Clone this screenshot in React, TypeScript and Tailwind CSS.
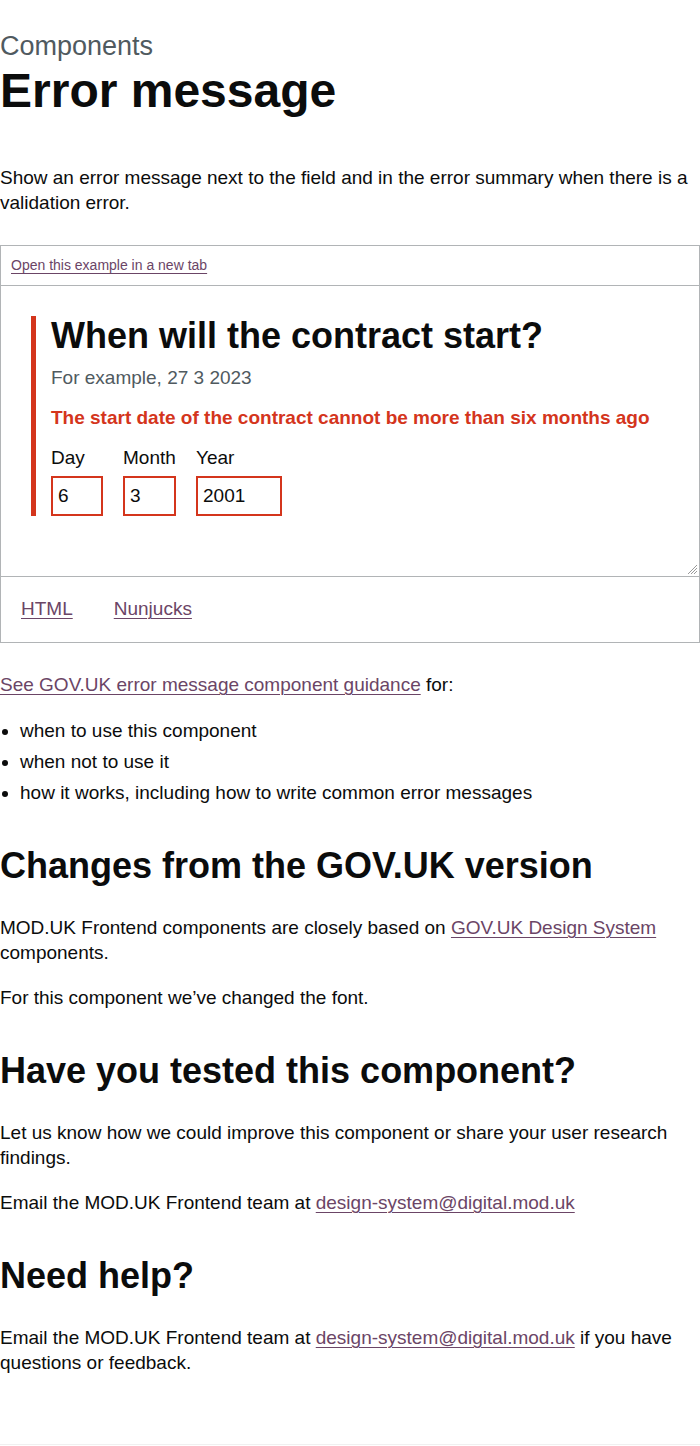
import React from "react";

const link = "text-[#6b4566] underline decoration-1 underline-offset-[3px]";

const ResizeHandle: React.FC = () => (
  <svg className="absolute right-[1px] bottom-[1px]" width="12" height="12" viewBox="0 0 12 12">
    <path d="M11 2 L2 11 M11 5 L5 11 M11 8 L8 11" stroke="#9a9a9a" strokeWidth="1" />
  </svg>
);

const DateInput: React.FC<{ label: string; value: string; width: string }> = ({ label, value, width }) => (
  <div className="flex flex-col">
    <label className="text-[19px] leading-[25px]">{label}</label>
    <div className={`mt-[6px] h-[40px] ${width} border-2 border-[#d4351c] px-[5px] flex items-center text-[19px]`}>
      {value}
    </div>
  </div>
);

const Example: React.FC = () => (
  <div className="mt-[30px] border border-[#b1b4b6]">
    <div className="h-[40px] border-b border-[#b1b4b6] flex items-center px-[10px]">
      <a className={`${link} text-[14px]`}>Open this example in a new tab</a>
    </div>
    <div className="relative h-[291px] border-b border-[#b1b4b6] pt-[30px] pl-[30px]">
      <div className="border-l-[5px] border-[#d4351c] pl-[15px]">
        <h2 className="text-[36px] leading-[40px] font-bold">When will the contract start?</h2>
        <div className="mt-[9px] text-[19px] leading-[25px] text-[#505a5f]">For example, 27 3 2023</div>
        <div className="mt-[15px] text-[19px] leading-[25px] font-bold text-[#d4351c]">
          The start date of the contract cannot be more than six months ago
        </div>
        <div className="mt-[15px] flex gap-[20px]">
          <DateInput label="Day" value="6" width="w-[52px]" />
          <DateInput label="Month" value="3" width="w-[53px]" />
          <DateInput label="Year" value="2001" width="w-[86px]" />
        </div>
      </div>
      <ResizeHandle />
    </div>
    <div className="h-[65px] flex items-center gap-[41px] px-[20px] text-[19px]">
      <a className={link}>HTML</a>
      <a className={link}>Nunjucks</a>
    </div>
  </div>
);

const App: React.FC = () => {
  return (
    <div className="w-[700px] text-[#0b0c0c] font-['Liberation_Sans',Arial,sans-serif]">
      <div className="pt-[31px] text-[27px] leading-[30px] text-[#505a5f]">Components</div>
      <h1 className="mt-[5px] text-[48px] leading-[50px] font-bold">Error message</h1>
      <p className="mt-[49px] text-[19px] leading-[25px]">
        Show an error message next to the field and in the error summary when there is a validation error.
      </p>
      <Example />
      <p className="mt-[29px] text-[19px] leading-[25px]">
        <a className={link}>See GOV.UK error message component guidance</a> for:
      </p>
      <ul className="mt-[21px] flex flex-col gap-[6px] text-[19px] leading-[25px] list-disc pl-[20px]">
        <li>when to use this component</li>
        <li>when not to use it</li>
        <li>how it works, including how to write common error messages</li>
      </ul>
      <h2 className="mt-[41px] text-[36px] leading-[40px] font-bold">Changes from the GOV.UK version</h2>
      <p className="mt-[29px] text-[19px] leading-[25px]">
        MOD.UK Frontend components are closely based on <a className={link}>GOV.UK Design System</a> components.
      </p>
      <p className="mt-[20px] text-[19px] leading-[25px]">For this component we’ve changed the font.</p>
      <h2 className="mt-[41px] text-[36px] leading-[40px] font-bold">Have you tested this component?</h2>
      <p className="mt-[29px] text-[19px] leading-[25px]">
        Let us know how we could improve this component or share your user research findings.
      </p>
      <p className="mt-[20px] text-[19px] leading-[25px]">
        Email the MOD.UK Frontend team at <a className={link}>design-system@digital.mod.uk</a>
      </p>
      <h2 className="mt-[41px] text-[36px] leading-[40px] font-bold">Need help?</h2>
      <p className="mt-[29px] text-[19px] leading-[25px]">
        Email the MOD.UK Frontend team at <a className={link}>design-system@digital.mod.uk</a> if you have
        questions or feedback.
      </p>
      <div className="mt-[69px] border-t border-[#f0f0f0] h-[1px]" />
    </div>
  );
};

export default App;
